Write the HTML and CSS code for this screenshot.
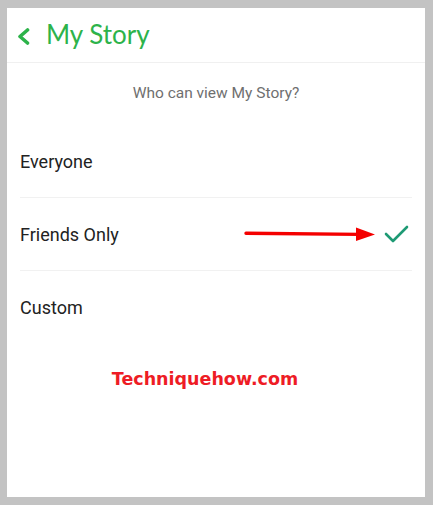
FILE: index.html
```html
<!DOCTYPE html>
<html>

<head>
    <meta charset="utf-8" />
    <title>My Story</title>
    <meta name="viewport" content="width=device-width, initial-scale=1">
    <link rel="stylesheet" href="styles.css">
</head>

<body>
    <div class="screen">
        <div class="header">
            <svg class="back" width="15" height="17" viewBox="0 0 15 17">
                <path d="M11.5 2 L4 8.5 L11.5 15" fill="none" stroke="#2db34a" stroke-width="3.6" stroke-linecap="round" stroke-linejoin="round"/>
            </svg>
            <div class="title">My Story</div>
        </div>
        <div class="question">Who can view My Story?</div>
        <div class="options">
            <div class="option">
                <span>Everyone</span>
            </div>
            <div class="option">
                <span>Friends Only</span>
                <svg class="arrow" width="132" height="16" viewBox="0 0 132 16">
                    <path d="M2 7.2 L116 8.4" stroke="#f40000" stroke-width="3.4" stroke-linecap="round"/>
                    <path d="M112 1.5 L131 8.6 L112 15 Z" fill="#f40000"/>
                </svg>
                <svg class="check" width="26" height="20" viewBox="0 0 26 20">
                    <path d="M2 10 L9 17 L23 3" fill="none" stroke="#1e9a74" stroke-width="2.6" stroke-linecap="round" stroke-linejoin="round"/>
                </svg>
            </div>
            <div class="option">
                <span>Custom</span>
            </div>
        </div>
        <div class="watermark">Techniquehow.com</div>
    </div>
</body>

</html>
```

FILE: styles.css
```css
body {
    margin: 0;
    padding: 8px 8px 8px 7px;
    background-color: #c3c3c3;
}

.screen {
    background-color: white;
    height: 489px;
    font-family: Roboto, "Noto Sans", sans-serif;
}

.header {
    display: flex;
    align-items: center;
    height: 54px;
    padding-left: 9px;
    border-bottom: 1px solid #f0f0f0;
}

.back {
    margin-top: 2px;
}

.title {
    margin-left: 15px;
    font-family: Lato, sans-serif;
    font-size: 26px;
    color: #2db34a;
    padding-bottom: 2px;
}

.question {
    height: 60px;
    display: flex;
    align-items: center;
    justify-content: center;
    font-size: 15.5px;
    color: #6f6f6f;
    padding-bottom: 2px;
}

.options {
    padding: 0 13px 0 13px;
}

.option {
    display: flex;
    align-items: center;
    height: 72px;
    border-bottom: 1px solid #f1f1f1;
    font-size: 18px;
    color: #222;
}

.option:last-child {
    border-bottom: none;
}

.option span {
    flex: 1;
}

.arrow {
    margin-right: 8px;
}

.check {
    margin-right: 2px;
}

.watermark {
    margin-top: 26px;
    text-align: center;
    font-family: "DejaVu Sans", Verdana, sans-serif;
    font-weight: bold;
    font-size: 17.5px;
    color: #ee1c25;
    padding-right: 22px;
}
```
